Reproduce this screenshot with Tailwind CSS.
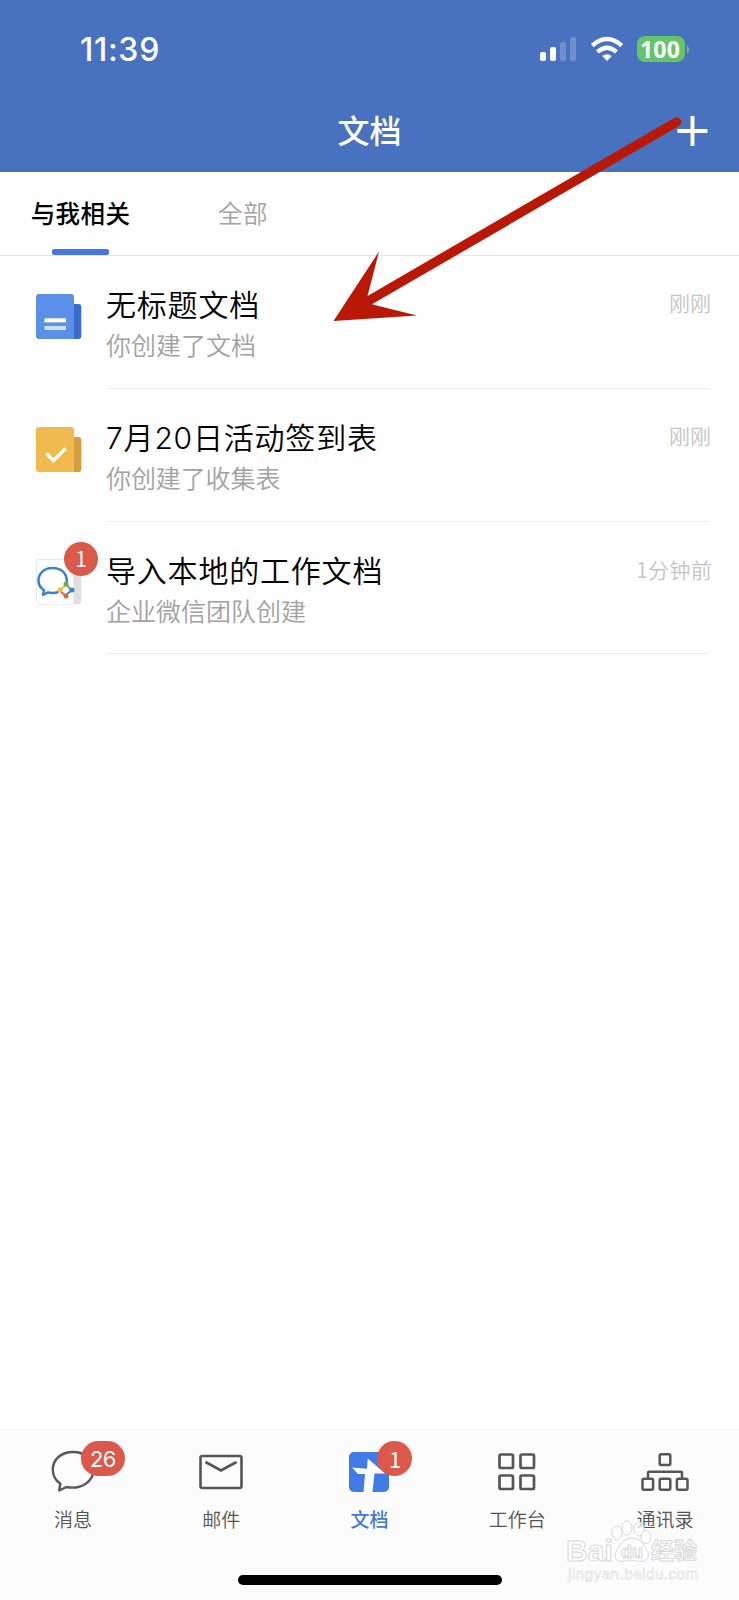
<!DOCTYPE html>
<html lang="zh-CN">
<head>
<meta charset="utf-8">
<title>文档</title>
<script src="https://cdn.jsdelivr.net/npm/@tailwindcss/browser@4"></script>
</head>
<body class="bg-white">
<div class="relative flex h-[1600px] w-[739px] flex-col overflow-hidden bg-[#fefefe] font-['Inter','Noto_Sans_CJK_SC',sans-serif]">
  <header class="flex h-[172px] shrink-0 flex-col bg-[#4871bf] text-white">
    <div class="flex h-[98px] items-center justify-between pl-[80px] pr-[50px]">
      <div class="pt-[2px] text-[32px] font-medium leading-none tracking-[0.700px]">11:39</div>
      <div class="flex items-center">
        <svg width="38" height="26" viewBox="0 0 38 26" fill="#fff"><rect x="1" y="16" width="6" height="9" rx="2"/><rect x="11" y="11" width="6" height="14" rx="2"/><g opacity=".22"><rect x="21" y="6" width="6" height="19" rx="2"/><rect x="31" y="1" width="6" height="24" rx="2"/></g></svg>
        <svg class="ml-[13px]" width="34" height="26" viewBox="0 0 34 26" fill="none" stroke="#fff" stroke-width="4.3"><path d="M2.3 9.6Q17 -3.6 31.700 9.600"/><path d="M7.500 15.900Q17 7.500 26.500 15.900"/><path d="M17 25 12.200 20.100Q17 16.300 21.800 20.100Z" fill="#fff" stroke="none"/></svg>
        <div class="ml-[13px] flex h-[26px] w-[48px] items-center justify-center rounded-[8px] bg-[#65c466] pr-[2px] font-['Open_Sans'] text-[23px] font-bold leading-none tracking-[0.2px]">100</div>
        <svg class="ml-[2px]" width="2" height="9" viewBox="0 0 2 9"><path d="M0 0Q2 2 2 4.500Q2 7 0 9Z" fill="#65c466"/></svg>
      </div>
    </div>
    <div class="grid h-[66px] grid-cols-3 items-center pr-[31px] pl-[31px]">
      <span></span>
      <h1 class="pt-[2px] text-center text-[32px] font-medium leading-none">文档</h1>
      <svg class="mb-[1px] justify-self-end" width="31" height="30" viewBox="0 0 31 30" stroke="#fff" stroke-width="3.900"><path d="M.5 15H30.500M15.500 0V30"/></svg>
    </div>
  </header>

  <nav class="flex h-[84px] shrink-0 border-b border-[#e6e6e6] text-[24.500px] leading-none">
    <div class="ml-[30px] flex w-[101px] flex-col items-center justify-between pt-[30px] font-medium text-black">
      <span class="whitespace-nowrap tracking-[0.400px]">与我相关</span>
      <span class="h-[6px] w-[57px] rounded-[2px] bg-[#4578da]"></span>
    </div>
    <div class="ml-[87px] pt-[30px] font-[350] tracking-[0.400px] text-[#a2a2a2]">全部</div>
  </nav>

  <main class="flex grow flex-col">
    <article class="flex h-[133px] pl-[36px] pr-[30px]">
      <svg class="mt-[38px]" width="46" height="46" viewBox="0 0 46 46"><rect x="34" y="10" width="11.300" height="35" rx="3" fill="#3c6dce"/><path d="M3 0H35Q38 0 38 3V45H3Q0 45 0 42V3Q0 0 3 0Z" fill="#5c8fea"/><path d="M8.500 24.300H30V28.400H8.500Z" fill="#fff"/><path d="M8.500 32H30V36H8.500Z" fill="#cfe4fc"/></svg>
      <div class="ml-[24px] flex grow justify-between border-b border-[#ececec]">
        <div class="pt-[34px]"><h2 class="text-[30px] leading-[30px] font-[350] tracking-[0.800px] text-black">无标题文档</h2><p class="mt-[14px] text-[25px] leading-[25px] font-[350] text-[#a2a2a2]">你创建了文档</p></div>
        <time class="-mr-[2px] pt-[37px] text-[21px] leading-[21px] font-[350] text-[#c5c5c5]">刚刚</time>
      </div>
    </article>
    <article class="flex h-[133px] pl-[36px] pr-[30px]">
      <svg class="mt-[38px]" width="46" height="46" viewBox="0 0 46 46"><rect x="34" y="10" width="11.300" height="35" rx="3" fill="#d79c3b"/><path d="M3 0H35Q38 0 38 3V45H3Q0 45 0 42V3Q0 0 3 0Z" fill="#f0ba4e"/><path d="M10.500 26.500 17.500 33.500 29.500 21.500" fill="none" stroke="#fff" stroke-width="3.500"/></svg>
      <div class="ml-[24px] flex grow justify-between border-b border-[#f1f1f1]">
        <div class="pt-[34px]"><h2 class="text-[30px] leading-[30px] font-[350] tracking-[0.800px] text-black">7月20日活动签到表</h2><p class="mt-[14px] text-[25px] leading-[25px] font-[350] tracking-[-0.100px] text-[#a2a2a2]">你创建了收集表</p></div>
        <time class="-mr-[2px] pt-[37px] text-[21px] leading-[21px] font-[350] text-[#c5c5c5]">刚刚</time>
      </div>
    </article>
    <article class="flex h-[132px] pl-[36px] pr-[30px]">
      <div class="relative h-[46px] w-[46px] mt-[37px]">
        <svg width="46" height="46" viewBox="0 0 46 46"><rect x="34" y="10" width="11.300" height="35" rx="3" fill="#e0e0e1"/><rect x=".5" y=".5" width="37" height="45" rx="2" fill="#fff" stroke="#ebebeb"/><path d="M30.800 24C31.500 15 26 9 16.500 9C8 9 2.500 14.500 2.500 21.500C2.500 26 4.500 29 8 31.200L7 36L12 33.400Q17 34.600 22.500 33" fill="none" stroke="#3f7fd3" stroke-width="2.500" stroke-linejoin="round"/><g fill="none" stroke-width="2"><path d="M30 25 35 31" stroke="#66ad4f"/><path d="M36 31 30 36" stroke="#3f7fd3"/><path d="M30 37 24 32" stroke="#dc6738"/><path d="M24 31 30 26" stroke="#efbd48"/></g><circle cx="30" cy="25" r="2.500" fill="#66ad4f"/><circle cx="36" cy="31" r="2.500" fill="#3f7fd3"/><circle cx="30" cy="37" r="2.500" fill="#dc6738"/><circle cx="24" cy="31" r="2.500" fill="#efbd48"/></svg>
        <span class="absolute left-[28px] -top-[17px] flex h-[34px] w-[34px] items-center justify-center rounded-full bg-[#dc584a] pb-[2px] font-['Noto_Sans_CJK_SC'] text-[21px] leading-none text-white">1</span>
      </div>
      <div class="ml-[24px] flex grow justify-between border-b border-[#ebebeb]">
        <div class="pt-[34px]"><h2 class="text-[30px] leading-[30px] font-[350] tracking-[0.800px] text-black">导入本地的工作文档</h2><p class="mt-[14px] text-[25px] leading-[25px] font-[350] text-[#a2a2a2]">企业微信团队创建</p></div>
        <time class="-mr-[3px] pt-[37px] font-['Noto_Sans_CJK_SC'] text-[21px] leading-[21px] font-[350] tracking-[0.300px] text-[#c5c5c5]">1分钟前</time>
      </div>
    </article>
  </main>

  <footer class="flex h-[171px] shrink-0 flex-col items-center justify-between border-t border-[#f5f5f5] bg-[#fcfcfc] pb-[15px] pt-[20px] text-[19px] leading-none text-[#555]">
    <div class="grid w-full grid-cols-5">
      <div class="flex flex-col items-center gap-[19px] pr-[2px]">
        <div class="relative h-[42px] w-[44px]">
          <svg width="44" height="42" viewBox="0 0 44 42" fill="none" stroke="#58585b" stroke-width="2.400" stroke-linejoin="round"><path d="M22 2C10 2 1.800 9.500 1.800 19.500C1.800 26 4.500 30.500 9.300 33.500L8.200 40.500L15.500 37C31 40 42.500 31 42.500 19.500C42.500 9.500 34 2 22 2Z"/></svg>
          <span class="absolute left-[30px] -top-[9px] flex h-[35px] w-[44px] items-center justify-center rounded-full bg-[#dc584a] text-[22px] leading-none tracking-[-0.700px] text-white">26</span>
        </div>
        <span class="font-[350]">消息</span>
      </div>
      <div class="flex flex-col items-center gap-[19px] pr-[1px]">
        <svg width="44" height="42" viewBox="0 0 44 42" fill="none" stroke="#555" stroke-width="2.600"><rect x="1.500" y="6" width="41" height="32" rx="2"/><path d="M6.500 12 22 20.500 37.500 12"/></svg>
        <span class="font-[350]">邮件</span>
      </div>
      <div class="flex flex-col items-center gap-[19px] text-[#4178d9]">
        <div class="relative h-[42px] w-[40px]">
          <svg width="40" height="42" viewBox="0 0 40 42"><rect y="2" width="40" height="40" rx="5" fill="#407be6"/><path d="M18.800 8.500 36 23.500H25.500L23.500 42H14.500L16 24H9L3 17.500 18 18.800Z" fill="#fff"/></svg>
          <span class="absolute left-[28px] -top-[9px] flex h-[35px] w-[35px] items-center justify-center rounded-full bg-[#dc584a] pb-[2px] font-['Noto_Sans_CJK_SC'] text-[22px] leading-none text-white">1</span>
        </div>
        <span class="font-medium">文档</span>
      </div>
      <div class="flex flex-col items-center gap-[19px]">
        <svg width="38" height="42" viewBox="0 0 38 42" fill="none" stroke="#565656" stroke-width="2.700"><rect x="1.500" y="4.500" width="13.500" height="13.500" rx="1.500"/><rect x="22.500" y="4.500" width="13.500" height="13.500" rx="1.500"/><rect x="1.500" y="25.500" width="13.500" height="13.500" rx="1.500"/><rect x="22.500" y="25.500" width="13.500" height="13.500" rx="1.500"/></svg>
        <span class="font-[350]">工作台</span>
      </div>
      <div class="flex flex-col items-center gap-[19px]">
        <svg width="48" height="42" viewBox="0 0 48 42" fill="none" stroke="#565656" stroke-width="2.500"><rect x="18.700" y="4.300" width="10.600" height="10.600" rx="1.500"/><path d="M7 28V23Q7 21.800 8.300 21.800H39.700Q41 21.800 41 23V28"/><rect x="1.500" y="28.700" width="10.600" height="11" rx="1.500"/><rect x="18.700" y="28.700" width="10.600" height="11" rx="1.500"/><rect x="35.900" y="28.700" width="10.600" height="11" rx="1.500"/></svg>
        <span class="font-[350]">通讯录</span>
      </div>
    </div>
    <div class="h-[10px] w-[264px] rounded-full bg-black"></div>
  </footer>

  <!-- watermark -->
  <svg class="absolute left-[560px] top-[1515px]" width="150" height="72" viewBox="0 0 150 72" fill="#fff" fill-opacity=".7" stroke="#d9d9d9" stroke-width="1">
    <ellipse cx="57" cy="18" rx="5" ry="7"/><ellipse cx="67" cy="13" rx="5" ry="7"/><ellipse cx="79" cy="14" rx="5" ry="7"/><ellipse cx="86" cy="22" rx="5" ry="6.500"/>
    <path d="M72 23C82 23 84 31 88 37C90 44 84 48 77 46Q72 44 65 46C57 48 53 43 56 37C59 31 63 23 72 23Z"/>
    <g font-family="Liberation Sans, sans-serif" font-weight="700"><text x="6" y="46" font-size="29" textLength="47" lengthAdjust="spacingAndGlyphs">Bai</text><text x="61" y="43" font-size="18" textLength="22">du</text></g>
    <text x="91" y="44" font-family="Noto Sans CJK SC, sans-serif" font-weight="700" font-size="23" textLength="46">经验</text>
    <text x="8" y="64" font-family="Liberation Sans, sans-serif" font-size="15" stroke-width=".5" textLength="130">jingyan.baidu.com</text>
  </svg>

  <!-- pointer arrow -->
  <svg class="pointer-events-none absolute left-0 top-0" width="739" height="340" viewBox="0 0 739 340"><path d="M676.500 122 370 300" stroke="#b91806" stroke-width="9.500" stroke-linecap="round"/><path d="M333.500 321 379 251.500 367.500 296 372.500 304.500 417 315.500Z" fill="#b91806"/></svg>
</div>
</body>
</html>
